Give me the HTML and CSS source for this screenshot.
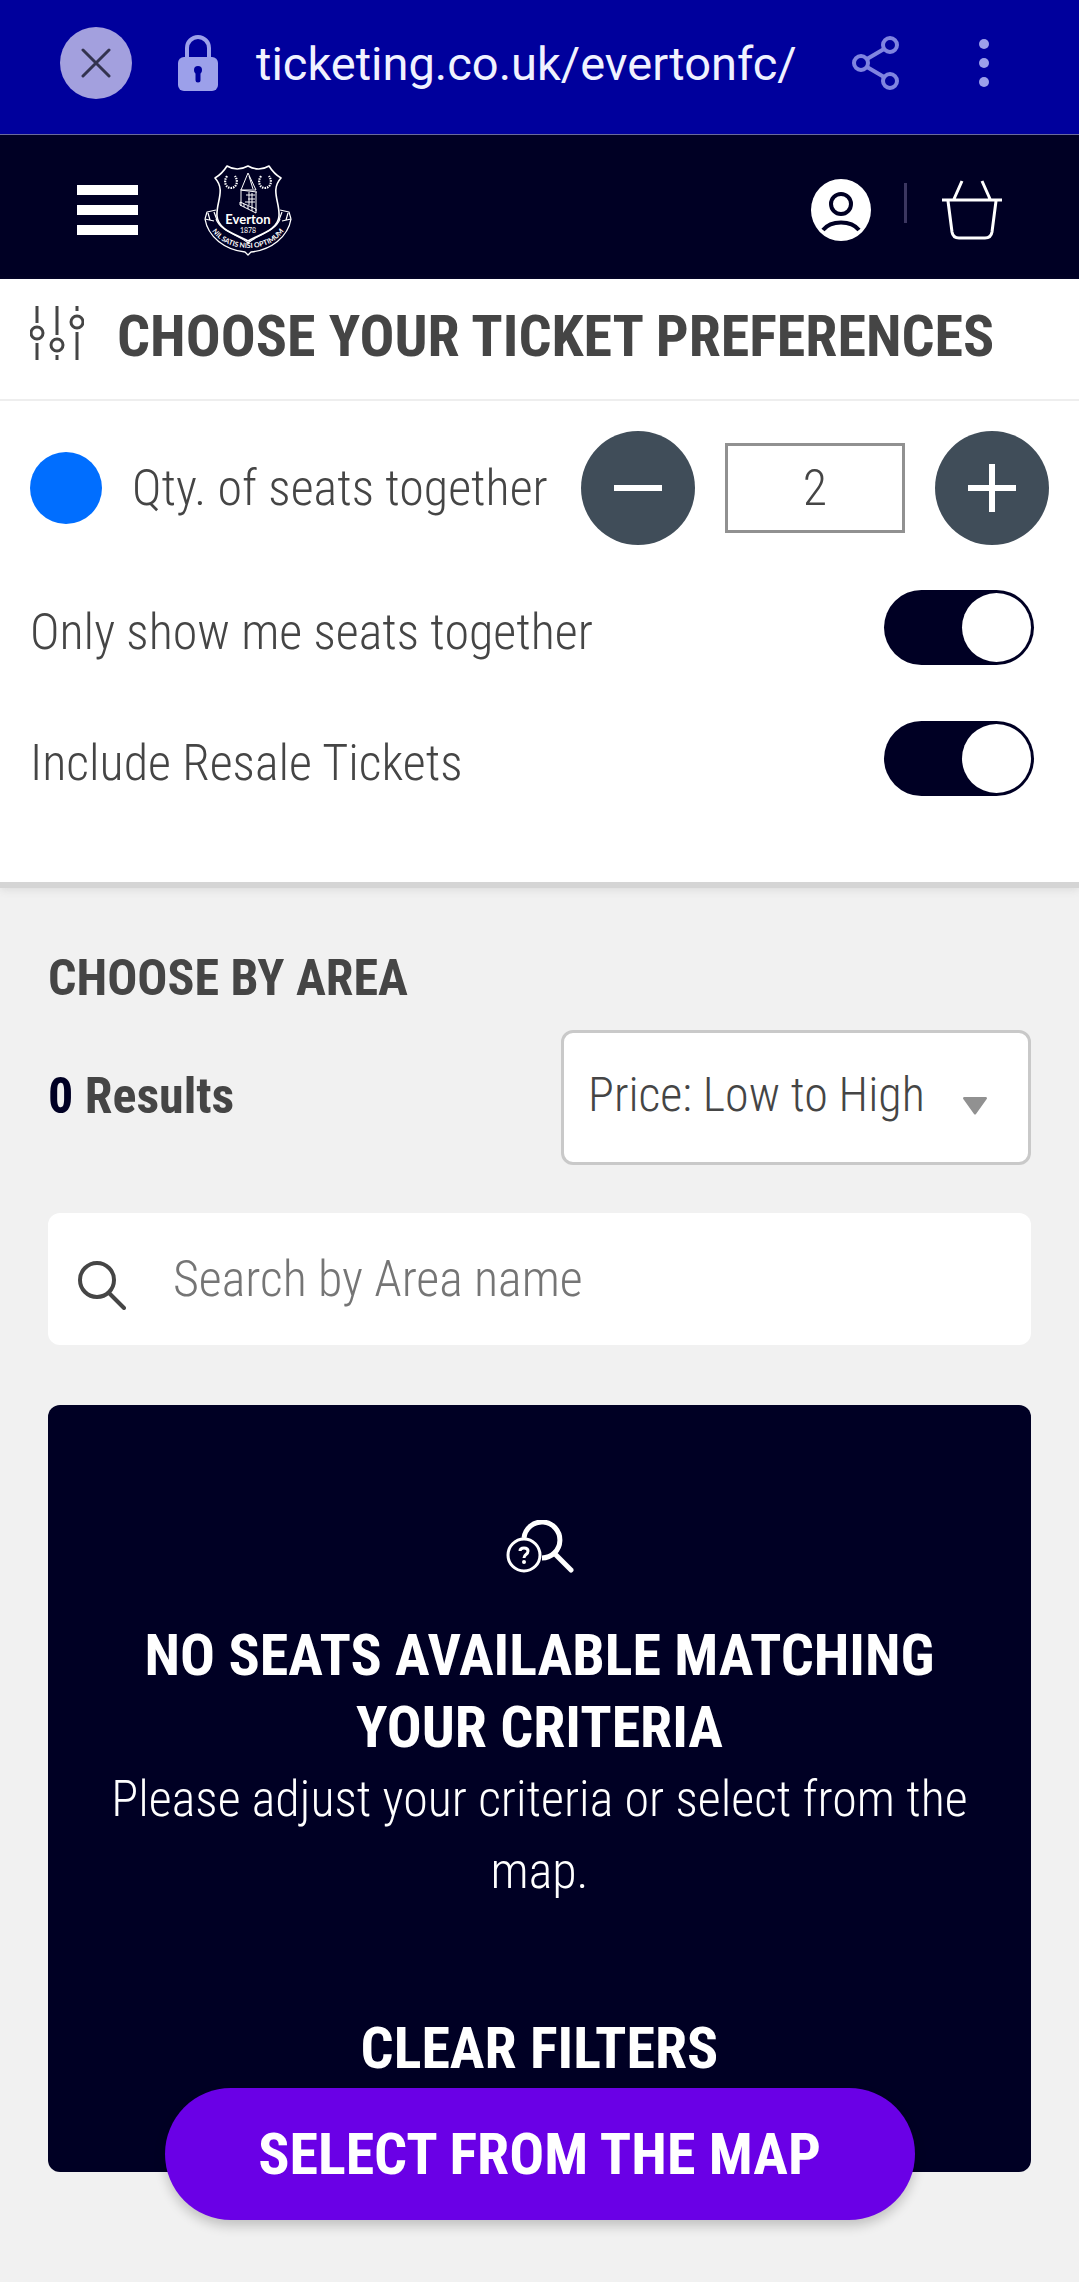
FILE: index.html
```
<!DOCTYPE html>
<html lang="en">
<head>
    <meta charset="UTF-8">
    <meta name="viewport" content="width=device-width, initial-scale=1.0">
    <title>Everton Ticketing</title>
    <link rel="stylesheet" href="styles.css">
</head>
<body>
    <!-- Browser bar -->
    <div class="browser-bar">
        <button type="button" class="close-tab" aria-label="Close">
            <svg width="30" height="30" viewBox="0 0 30 30" fill="none" stroke="#33334f" stroke-width="3" stroke-linecap="round">
                <path d="M2 2l26 26M28 2L2 28"/>
            </svg>
        </button>
        <svg class="lock" width="40" height="56" viewBox="0 0 40 56">
            <path d="M9 25V13a11 11 0 0 1 22 0v12" fill="none" stroke="#9ca0ea" stroke-width="4"/>
            <rect y="22" width="40" height="34" rx="6" fill="#9ca0ea"/>
            <circle cx="20" cy="35" r="4" fill="#00009c"/>
            <path d="M20 36v9" stroke="#00009c" stroke-width="5" stroke-linecap="round"/>
        </svg>
        <div class="url">ticketing.co.uk/evertonfc/</div>
        <button type="button" class="share" aria-label="Share">
            <svg width="48" height="56" viewBox="0 0 48 56" fill="none" stroke="#8084e0" stroke-width="4">
                <circle cx="9" cy="28" r="7"/>
                <circle cx="38" cy="10" r="7"/>
                <circle cx="38" cy="46" r="7"/>
                <path d="M15 24l17-10M15 32l17 10"/>
            </svg>
        </button>
        <button type="button" class="more" aria-label="More">
            <svg width="10" height="48" viewBox="0 0 10 48" fill="#9ca0ea">
                <circle cx="5" cy="5" r="5"/>
                <circle cx="5" cy="24" r="5"/>
                <circle cx="5" cy="43" r="5"/>
            </svg>
        </button>
    </div>

    <!-- Site header -->
    <header class="site-header">
        <button type="button" class="menu-btn" aria-label="Menu">
            <span></span>
            <span></span>
            <span></span>
        </button>
        <a href="#" class="crest" aria-label="Everton">
            <svg width="90" height="92" viewBox="0 0 90 92" fill="none" stroke="#fff" stroke-linejoin="round">
                <path stroke-width="1.6" d="M24 2Q34 8 45 2Q56 8 66 2Q71 10 78 14C67 26 77 38 76 52C75 66 57 70 45 77C33 70 15 66 14 52C13 38 23 26 12 14Q19 10 24 2Z"/>
                <path stroke-width="1.2" d="M13 55C18 68 36 71 45 79C54 71 72 68 77 55"/>
                <path stroke-width="1.3" d="M2 55C5 73 22 86 42 88L45 91L48 88C68 86 85 73 88 55"/>
                <path stroke-width="1.2" d="M2 55L11 57M2 55L4 48L13 46M5 49L7 56M11 48L14 56M88 55L79 57M88 55L86 48L77 46M85 49L83 56M79 48L76 56"/>
                <path stroke-width="1" d="M45 9L38 26H53ZM37 26L54 28M38 27V42M53 28V47M37 41L53 49V45L37 38Z"/>
                <path stroke-width="1" d="M46 12L50 25M43 31h9M45 35h7M42 38h10M46 28v13M49 29v15M41 40v3M45 42v3M49 43v4"/>
                <path stroke-width="2.2" stroke-dasharray="1.5 1" d="M24 12C20 18 23 24 28 24S36 18 32 12M58 12C54 18 57 24 62 24S70 18 66 12"/>
                <path id="motto" stroke="none" d="M6 60C16 92 74 92 84 60"/>
                <g fill="#fff" stroke="none" text-anchor="middle">
                    <text class="crest-name" x="45" y="60">Everton</text>
                    <text class="crest-year" x="45" y="69">1878</text>
                    <text class="crest-motto"><textPath href="#motto" startOffset="50%">NIL SATIS NISI OPTIMUM</textPath></text>
                </g>
            </svg>
        </a>
        <a href="#" class="account" aria-label="Account">
            <svg width="60" height="62" viewBox="0 0 60 62">
                <ellipse cx="30" cy="31" rx="30" ry="31" fill="#fff"/>
                <g fill="none" stroke="#000024" stroke-width="4">
                    <circle cx="30" cy="25" r="10"/>
                    <path d="M12 51C20 41 40 41 48 51"/>
                </g>
            </svg>
        </a>
        <span class="divider"></span>
        <a href="#" class="basket" aria-label="Basket">
            <svg width="60" height="60" viewBox="0 0 60 60" fill="none" stroke="#fff" stroke-width="3">
                <path d="M0 20h60M6 21L10 52Q11 58 17 58H43Q49 58 50 52L54 21M12 19L20 1M48 19L40 1"/>
            </svg>
        </a>
    </header>

    <!-- Ticket preferences -->
    <section class="preferences">
        <div class="preferences-title">
            <svg width="54" height="56" viewBox="0 0 54 56" fill="none" stroke="#454545" stroke-width="3">
                <path d="M7 1v17M7 38v17M27 1v29M27 50v5M47 1v5M47 27v28"/>
                <circle cx="7" cy="28" r="6"/>
                <circle cx="27" cy="40" r="6"/>
                <circle cx="47" cy="17" r="6"/>
            </svg>
            <h1>CHOOSE YOUR TICKET PREFERENCES</h1>
        </div>
        <div class="preferences-body">
            <div class="qty-row">
                <span class="dot"></span>
                <label for="qty">Qty. of seats together</label>
                <button type="button" class="qty-btn" aria-label="Fewer seats">
                    <svg width="50" height="50" viewBox="0 0 50 50" stroke="#fff" stroke-width="6"><path d="M1 25h48"/></svg>
                </button>
                <input type="text" id="qty" value="2">
                <button type="button" class="qty-btn" aria-label="More seats">
                    <svg width="50" height="50" viewBox="0 0 50 50" stroke="#fff" stroke-width="6"><path d="M1 25h48M25 1v48"/></svg>
                </button>
            </div>
            <div class="toggle-row">
                <label for="together">Only show me seats together</label>
                <input type="checkbox" class="toggle" id="together" checked>
            </div>
            <div class="toggle-row">
                <label for="resale">Include Resale Tickets</label>
                <input type="checkbox" class="toggle" id="resale" checked>
            </div>
        </div>
    </section>

    <!-- Area list -->
    <main class="areas">
        <h2>CHOOSE BY AREA</h2>
        <div class="results-row">
            <p class="results"><span>0</span> Results</p>
            <div class="sort">
                <select aria-label="Sort by">
                    <option>Price: Low to High</option>
                    <option>Price: High to Low</option>
                </select>
                <svg class="sort-arrow" width="24" height="18" viewBox="0 0 24 18" fill="#919191"><path d="M1 0h22q2 1 0 3L13 17q-1 1-2 0L1 3q-2-2 0-3z"/></svg>
            </div>
        </div>
        <div class="search">
            <svg width="48" height="50" viewBox="0 0 48 50" fill="none" stroke="#454545" stroke-width="4" stroke-linecap="round">
                <circle cx="19" cy="20" r="17"/>
                <path d="M31 33l15 15"/>
            </svg>
            <input type="text" aria-label="Search by Area name" placeholder="Search by Area name">
        </div>
        <div class="no-seats">
            <svg width="68" height="54" viewBox="0 0 68 54" fill="none" stroke="#fff">
                <path stroke-width="5" d="M18 18A18 18 0 1 1 36 38"/>
                <path stroke-width="5" stroke-linecap="round" d="M49 34l16 16"/>
                <circle cx="18" cy="35" r="16" stroke-width="3"/>
                <path stroke-width="3" d="M14 31Q14 28 18 28T22 31C22 35 18 34 18 38"/>
                <circle cx="18" cy="42" r="2" fill="#fff" stroke="none"/>
            </svg>
            <h3>NO SEATS AVAILABLE MATCHING YOUR CRITERIA</h3>
            <p>Please adjust your criteria or select from the map.</p>
            <button type="button" class="clear-btn">CLEAR FILTERS</button>
        </div>
        <button type="button" class="map-btn">SELECT FROM THE MAP</button>
    </main>
</body>
</html>
```
FILE: styles.css
```
* {
    box-sizing: border-box;
}
body {
    margin: 0;
    font-family: "Roboto Condensed", Roboto, sans-serif;
    font-size: 50px;
    font-weight: 300;
    line-height: 72px;
    color: #454545;
    background-color: #f1f1f1;
}
h1, h2, h3, p {
    margin: 0;
}
h1, h3 {
    font-size: 58px;
    font-weight: bold;
}
h2 {
    font-size: 50px;
    font-weight: bold;
}
svg {
    display: block;
    flex-shrink: 0;
}
button {
    padding: 0;
    border: none;
    background: none;
    font-family: inherit;
    cursor: pointer;
}
input, select {
    font: inherit;
    color: inherit;
}

/* Browser bar */
.browser-bar {
    display: flex;
    align-items: center;
    height: 135px;
    padding: 0 90px 8px 60px;
    background-color: #00009c;
    border-bottom: 1px solid #6a6a9c;
}
.close-tab {
    display: flex;
    align-items: center;
    justify-content: center;
    width: 72px;
    height: 72px;
    border-radius: 50%;
    background-color: #a3a0de;
}
.lock {
    margin: 0 38px 0 46px;
}
.url {
    flex: 1;
    padding-top: 2px;
    font-family: Roboto, sans-serif;
    font-size: 47px;
    font-weight: 400;
    white-space: nowrap;
    color: #f0f2ff;
}
.share {
    margin: 0 79px 0 50px;
}

/* Site header */
.site-header {
    display: flex;
    align-items: center;
    height: 144px;
    padding: 6px 77px 0;
    background-color: #000024;
}
.menu-btn {
    display: flex;
    flex-direction: column;
    gap: 10px;
    width: 61px;
}
.menu-btn span {
    height: 10px;
    background-color: #fff;
}
.crest {
    margin: 0 auto 0 65px;
}
.crest-name {
    font: bold 13px Lato, sans-serif;
}
.crest-year {
    font: 7px Lato, sans-serif;
}
.crest-motto {
    font: bold 7px Lato, sans-serif;
}
.divider {
    width: 3px;
    height: 40px;
    margin: 0 35px 14px 33px;
    background-color: #3b3660;
}

/* Ticket preferences */
.preferences {
    background-color: #fff;
    box-shadow: 0 6px 0 #d5d5d5, 0 8px 8px #dcdcdc;
}
.preferences-title {
    display: flex;
    align-items: center;
    gap: 33px;
    height: 122px;
    padding: 0 30px 12px;
    border-bottom: 2px solid #eee;
}
.preferences-title h1 {
    padding-top: 6px;
}
.preferences-body {
    padding: 30px 30px 58px;
}
.qty-row {
    display: flex;
    align-items: center;
    gap: 30px;
}
.qty-row label {
    flex: 1;
    margin-right: -30px;
    white-space: nowrap;
}
.dot {
    width: 72px;
    height: 72px;
    border-radius: 50%;
    background-color: #006eff;
}
.qty-btn {
    display: flex;
    align-items: center;
    justify-content: center;
    width: 114px;
    height: 114px;
    border-radius: 50%;
    background-color: #404d59;
}
#qty {
    width: 180px;
    height: 90px;
    padding: 0;
    border: 3px solid #919191;
    text-align: center;
}
.toggle-row {
    display: flex;
    align-items: center;
    justify-content: space-between;
    height: 131px;
    padding-right: 15px;
}
.toggle-row label {
    padding-top: 8px;
}
.toggle-row:nth-child(2) {
    margin-top: 17px;
}
.toggle {
    appearance: none;
    display: flex;
    width: 150px;
    height: 75px;
    margin: 0;
    padding: 3px;
    border-radius: 38px;
    background-color: #919191;
}
.toggle::before {
    content: "";
    width: 69px;
    height: 69px;
    border-radius: 50%;
    background-color: #fff;
}
.toggle:checked {
    justify-content: flex-end;
    background-color: #000024;
}

/* Area list */
.areas {
    padding: 60px 48px 62px;
}
.results-row {
    display: flex;
    align-items: center;
    justify-content: space-between;
    margin-top: 16px;
}
.results {
    padding-bottom: 4px;
    font-weight: bold;
}
.results span {
    color: #000024;
}
.sort {
    position: relative;
    width: 470px;
}
.sort select {
    appearance: none;
    display: block;
    width: 100%;
    height: 135px;
    padding: 0 80px 6px 24px;
    border: 3px solid #c9c9c9;
    border-radius: 12px;
    background-color: #fff;
    font-size: 48px;
}
.sort-arrow {
    position: absolute;
    right: 44px;
    top: 67px;
    pointer-events: none;
}
.search {
    display: flex;
    align-items: center;
    gap: 47px;
    height: 132px;
    margin-top: 48px;
    padding: 0 30px;
    border-radius: 12px;
    background-color: #fff;
}
.search svg {
    margin-top: 12px;
}
.search input {
    flex: 1;
    min-width: 0;
    padding: 0;
    border: none;
    background: none;
}
.search input::placeholder {
    color: #757575;
}
.no-seats {
    display: flex;
    flex-direction: column;
    align-items: center;
    margin-top: 60px;
    padding: 115px 50px 88px;
    border-radius: 12px;
    background-color: #000024;
    color: #fff;
    text-align: center;
}
.no-seats h3 {
    margin-top: 45px;
}
.clear-btn {
    margin-top: 105px;
    font-size: 58px;
    font-weight: bold;
    line-height: 72px;
    color: #fff;
}
.map-btn {
    position: sticky;
    bottom: 62px;
    display: block;
    width: 750px;
    max-width: 100%;
    height: 132px;
    margin: -84px auto 0;
    border-radius: 66px;
    background-color: #6a00e6;
    box-shadow: 0 6px 12px rgba(0,0,0,0.2);
    font-size: 58px;
    font-weight: bold;
    color: #fff;
}
```
